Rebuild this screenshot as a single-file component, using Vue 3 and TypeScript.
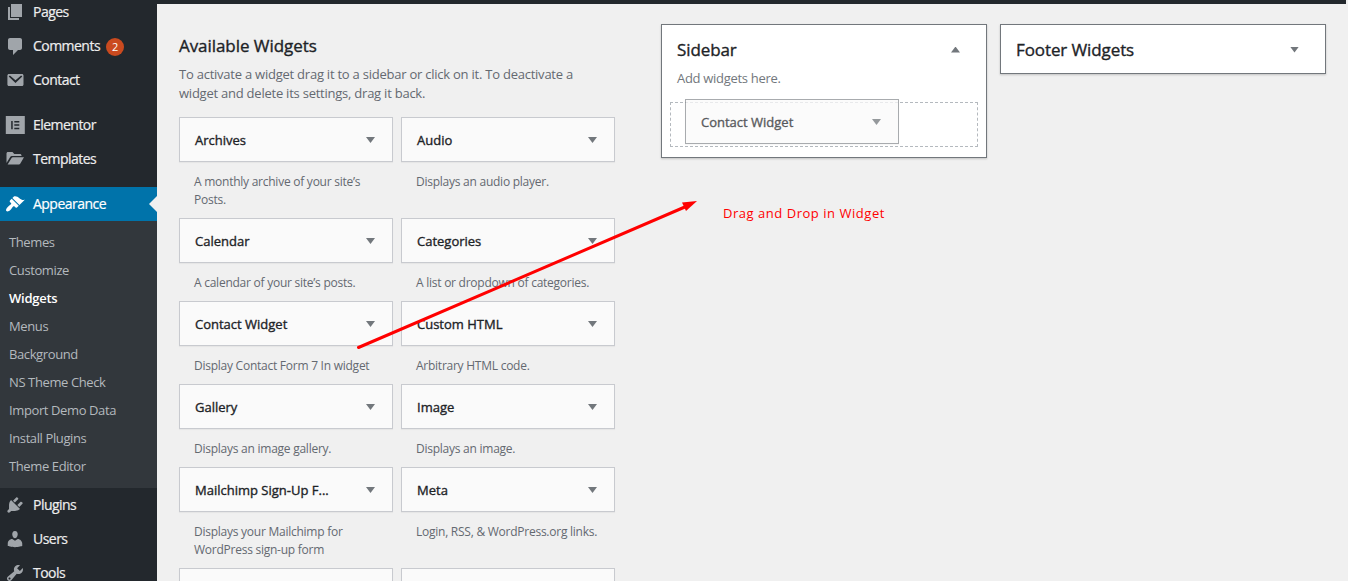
<script setup lang="ts">
interface MenuItem {
  label: string
  icon: string
  count?: number
  gap?: boolean
  current?: boolean
}
interface Widget {
  title: string
  text: string
}

const icons: Record<string, string> = {
  pages: 'M6 15V2h11v13zM5 16h9v2H3V5h2z',
  comments: 'M5 2h10c1.1 0 2 .9 2 2v8c0 1.100-.9 2-2 2h-2l-5 5v-5H5c-1.100 0-2-.9-2-2V4c0-1.100.9-2 2-2z',
  contact: 'M3.900 4h13.200c.7 0 1.400.7 1.400 1.500v9c0 .8-.7 1.500-1.400 1.500H3.900c-.8 0-1.500-.7-1.500-1.500v-9C2.400 4.700 3.100 4 3.900 4zM16.100 5.500L10.500 10.200 4.900 5.500 3.700 6.600l6.800 6.300 6.800-6.300z',
  elementor: 'M.8 1h19v18H.8zM6.200 6v8.200h1.500V6zM9.300 6v1.500h5V6zM9.300 9.300v1.500h5V9.300zM9.300 12.700v1.500h5v-1.500z',
  templates: 'M1.500 14V4.500C1.500 3.700 2.100 3 3 3h4.500L9.300 5H15c.8 0 1.500.6 1.500 1.500V7H7.400c-1 0-1.700.3-2.200 1.100zM2.600 15.500l4-6.600c.3-.5.7-.7 1.300-.7H19l-3.800 6.500c-.3.500-.7.800-1.300.8z',
  appearance: 'M14.480 11.060L7.410 3.990l1.500-1.500c.5-.56 2.300-.47 3.510.32 1.210.8 1.430 1.280 2.910 2.100 1.180.64 2.450 1.260 4.450.85zm-.71.710L6.700 4.700 4.930 6.470c-.39.390-.39 1.020 0 1.410l1.060 1.060c.39.390.39 1.030 0 1.420-.6.600-1.430 1.110-2.210 1.690-.35.260-.7.530-1.010.840C1.430 14.230.400 16.080 1.400 17.070c.99 1 2.840-.030 4.180-1.360.31-.310.580-.660.850-1.020.57-.780 1.080-1.610 1.690-2.210.39-.390 1.020-.390 1.410 0l1.060 1.060c.39.390 1.020.390 1.410 0z',
  plugins: 'M13.110 4.360L9.870 7.600 8 5.730l3.240-3.240c.35-.340 1.050-.2 1.560.320.52.510.66 1.210.31 1.550zm-8 1.770l.91-1.120 9.010 9.010-1.190.84c-.71.710-2.630 1.160-3.820 1.160H6.140L4.900 17.260c-.59.590-1.540.590-2.120 0-.59-.58-.59-1.530 0-2.120l1.240-1.240v-3.880c0-1.130.400-3.190 1.090-3.890zm7.260 3.970l3.240-3.240c.34-.350 1.040-.210 1.550.310.52.510.66 1.210.31 1.550l-3.240 3.250z',
  users: 'M10 9.250c-2.270 0-2.730-3.440-2.730-3.440C7 4.020 7.820 2 9.970 2c2.160 0 2.980 2.020 2.710 3.810 0 0-.41 3.440-2.680 3.440zm0 2.570L12.720 10c2.390 0 4.520 2.330 4.520 4.530v2.490s-3.650 1.130-7.240 1.130c-3.650 0-7.240-1.130-7.240-1.130v-2.490c0-2.250 1.940-4.480 4.470-4.480z',
  tools: 'M16.680 9.770c-1.340 1.340-3.300 1.670-4.950.990l-5.410 6.520c-.99.990-2.590.990-3.580 0s-.99-2.590 0-3.570l6.520-5.420c-.68-1.650-.35-3.610.99-4.950 1.280-1.280 3.120-1.620 4.720-1.060l-2.890 2.890 2.820 2.820 2.860-2.870c.53 1.580.180 3.390-1.080 4.650zM3.810 16.210c.4.390 1.040.390 1.430 0 .4-.400.4-1.040 0-1.430-.39-.400-1.030-.400-1.430 0-.39.390-.39 1.030 0 1.430z',
}

const upper: MenuItem[] = [
  { label: 'Pages', icon: 'pages' },
  { label: 'Comments', icon: 'comments', count: 2 },
  { label: 'Contact', icon: 'contact' },
  { label: 'Elementor', icon: 'elementor', gap: true },
  { label: 'Templates', icon: 'templates' },
  { label: 'Appearance', icon: 'appearance', gap: true, current: true },
]
const submenu = ['Themes', 'Customize', 'Widgets', 'Menus', 'Background', 'NS Theme Check', 'Import Demo Data', 'Install Plugins', 'Theme Editor']
const lower: MenuItem[] = [
  { label: 'Plugins', icon: 'plugins' },
  { label: 'Users', icon: 'users' },
  { label: 'Tools', icon: 'tools' },
]
const widgets: Widget[] = [
  { title: 'Archives', text: 'A monthly archive of your site’s Posts.' },
  { title: 'Audio', text: 'Displays an audio player.' },
  { title: 'Calendar', text: 'A calendar of your site’s posts.' },
  { title: 'Categories', text: 'A list or dropdown of categories.' },
  { title: 'Contact Widget', text: 'Display Contact Form 7 In widget' },
  { title: 'Custom HTML', text: 'Arbitrary HTML code.' },
  { title: 'Gallery', text: 'Displays an image gallery.' },
  { title: 'Image', text: 'Displays an image.' },
  { title: 'Mailchimp Sign-Up F...', text: 'Displays your Mailchimp for WordPress sign-up form' },
  { title: 'Meta', text: 'Login, RSS, & WordPress.org links.' },
  { title: '', text: '' },
  { title: '', text: '' },
]
</script>

<template>
  <div class="screen">
    <nav class="menu">
      <a v-for="m in upper" :key="m.label" class="item" :class="{ gap: m.gap, current: m.current }">
        <svg class="icon" viewBox="0 0 20 20"><path fill-rule="evenodd" :d="icons[m.icon]" /></svg>
        <span class="label">{{ m.label }}</span>
        <span v-if="m.count" class="count">{{ m.count }}</span>
      </a>
      <div class="submenu">
        <a v-for="s in submenu" :key="s" :class="{ active: s === 'Widgets' }">{{ s }}</a>
      </div>
      <a v-for="m in lower" :key="m.label" class="item">
        <svg class="icon" viewBox="0 0 20 20"><path fill-rule="evenodd" :d="icons[m.icon]" /></svg>
        <span class="label">{{ m.label }}</span>
      </a>
    </nav>

    <div class="body">
      <div class="bar"></div>
      <main class="content">
        <section class="available">
          <h2>Available Widgets</h2>
          <p class="intro">To activate a widget drag it to a sidebar or click on it. To deactivate a<br />widget and delete its settings, drag it back.</p>
          <div class="grid">
            <div v-for="(w, i) in widgets" :key="i">
              <div class="widget"><h3>{{ w.title }}</h3><i class="tri"></i></div>
              <p class="about">{{ w.text }}</p>
            </div>
          </div>
        </section>
        <section class="area open">
          <header><h2>Sidebar</h2><i class="tri up"></i></header>
          <p class="hint">Add widgets here.</p>
          <div class="drop">
            <div class="widget dragged"><h3>Contact Widget</h3><i class="tri"></i></div>
          </div>
        </section>
        <section class="area footer">
          <header><h2>Footer Widgets</h2><i class="tri"></i></header>
        </section>
      </main>
    </div>

    <svg class="arrow" viewBox="0 0 1348 581">
      <path d="M358.500 347.500L686 206.500" />
      <polygon points="697,201 682,202.500 686,211" />
    </svg>
    <span class="note">Drag and Drop in Widget</span>
  </div>
</template>

<style>
body {
  margin: 0;
  overflow: hidden;
}
</style>

<style scoped>
.screen {
  position: relative;
  display: flex;
  width: 1348px;
  height: 581px;
  overflow: hidden;
  background: #f0f0f0;
  font-family: "Open Sans", "Noto Sans", sans-serif;
  font-size: 13px;
  color: #1d2327;
}
h2, h3, p { margin: 0; }
h2, h3 { -webkit-text-stroke: 0.35px currentColor; }
.menu {
  flex: none;
  width: 157px;
  height: 586px;
  margin-top: -5px;
  background: #23282d;
}
.item {
  position: relative;
  display: flex;
  align-items: center;
  height: 34px;
  padding-left: 5px;
  color: #eee;
  font-size: 14px;
  letter-spacing: -0.53px;
}
.item.gap { margin-top: 11px; }
.label {
  margin-bottom: 2px;
  -webkit-text-stroke: 0.2px currentColor;
}
.icon {
  width: 20px;
  height: 20px;
  margin-right: 8px;
  fill: #a0a5aa;
}
.current {
  background: #0073aa;
  color: #fff;
}
.current .icon { fill: #fff; }
.current::after {
  content: "";
  position: absolute;
  right: 0;
  top: 9px;
  border: 8px solid transparent;
  border-left: 0;
  border-right-color: #f0f0f0;
}
.count {
  width: 18px;
  height: 18px;
  margin: 2px 0 0 6px;
  border-radius: 9px;
  background: #ca4a1f;
  color: #fff;
  font-size: 11px;
  line-height: 18px;
  text-align: center;
  letter-spacing: 0;
}
.submenu {
  padding: 7px 0 8px;
  background: #32373c;
}
.submenu a {
  display: block;
  height: 28px;
  padding-left: 9px;
  line-height: 28px;
  color: #b4b9be;
  letter-spacing: -0.39px;
}
.submenu .active {
  color: #fff;
  font-weight: 600;
  letter-spacing: -0.25px;
}
.body {
  flex: 1;
}
.bar {
  width: 1189px;
  height: 4px;
  background: #23282d;
}
.content {
  display: flex;
  align-items: flex-start;
  padding: 20px 0 0 22px;
}
.available { width: 436px; }
.available h2 {
  padding-top: 11px;
  font-size: 17px;
  line-height: 22px;
  font-weight: 400;
  letter-spacing: -0.06px;
}
.intro {
  margin-top: 8px;
  line-height: 19px;
  color: #646970;
  letter-spacing: -0.235px;
  white-space: nowrap;
}
.grid {
  display: grid;
  grid-template-columns: 214px 214px;
  column-gap: 8px;
  margin-top: 14px;
}
.widget {
  display: flex;
  align-items: center;
  justify-content: space-between;
  box-sizing: border-box;
  height: 45px;
  padding: 0 17px 0 15px;
  border: 1px solid #c8cacf;
  background: #fafafa;
  box-shadow: 0 1px 1px rgba(0, 0, 0, 0.04);
}
h3 {
  font-size: 13px;
  font-weight: 400;
  letter-spacing: 0;
}
.tri {
  width: 9px;
  height: 6px;
  margin-top: 1px;
  background: #72777c;
  clip-path: polygon(0 0, 100% 0, 50% 100%);
}
.tri.up { clip-path: polygon(0 100%, 100% 100%, 50% 0); }
.about {
  padding: 11px 14px 9px 15px;
  font-size: 12px;
  line-height: 18px;
  color: #646970;
  letter-spacing: -0.25px;
}
.area {
  box-sizing: border-box;
  width: 326px;
  margin-left: 46px;
  border: 1px solid #72777c;
  background: #fff;
  box-shadow: 0 1px 2px rgba(0, 0, 0, 0.2);
}
.area.footer { margin-left: 13px; }
.area header {
  display: flex;
  align-items: center;
  justify-content: space-between;
  height: 48px;
  padding: 0 26px 0 15px;
}
.area h2 {
  padding-top: 1px;
  font-size: 17px;
  font-weight: 400;
  line-height: 24px;
  letter-spacing: -0.1px;
}
.open { height: 134px; }
.hint {
  padding: 0 15px;
  margin-top: -4px;
  line-height: 19px;
  color: #72777c;
  letter-spacing: -0.3px;
}
.drop {
  box-sizing: border-box;
  width: 308px;
  height: 45px;
  margin: 14px 0 0 8px;
  border: 1px dashed #b4b9be;
}
.dragged {
  position: relative;
  top: -4px;
  left: 14px;
  width: 214px;
  border-color: #8c8f94;
  opacity: 0.75;
}
.arrow {
  position: absolute;
  inset: 0;
  width: 1348px;
  height: 581px;
  fill: #f00;
}
.arrow path {
  stroke: #f00;
  stroke-width: 3;
  stroke-linecap: round;
}
.note {
  position: absolute;
  left: 723px;
  top: 204px;
  line-height: 18px;
  color: #f00;
  letter-spacing: 0.53px;
  white-space: nowrap;
}
</style>
